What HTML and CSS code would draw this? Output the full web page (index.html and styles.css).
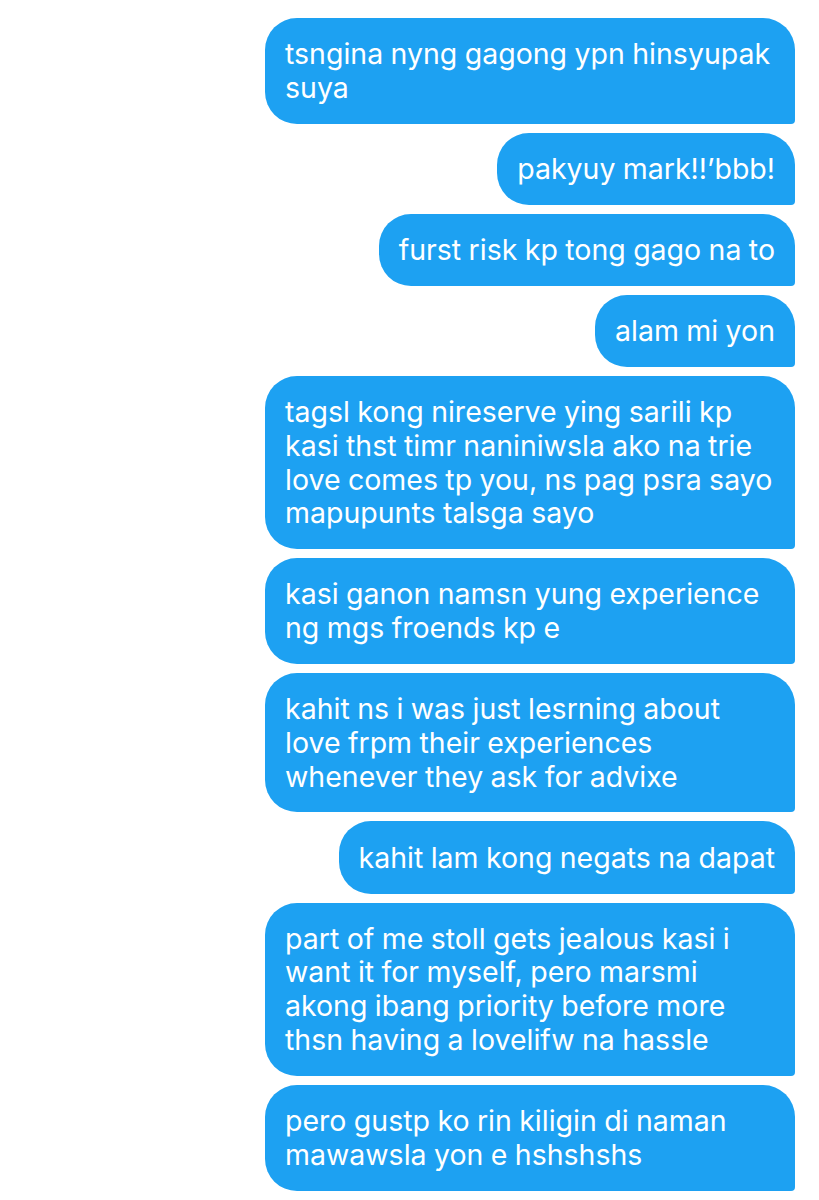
FILE: index.html
```html
<!DOCTYPE html>
<html lang="tl">
<head>
<meta charset="utf-8">
<title>Messages</title>
<link rel="stylesheet" href="styles.css">
</head>
<body>
<main class="thread">
  <div class="bubble">tsngina nyng gagong ypn hinsyupak suya</div>
  <div class="bubble">pakyuy mark!!’bbb!</div>
  <div class="bubble">furst risk kp tong gago na to</div>
  <div class="bubble">alam mi yon</div>
  <div class="bubble">tagsl kong nireserve ying sarili kp kasi thst timr naniniwsla ako na trie love comes tp you, ns pag psra sayo mapupunts talsga sayo</div>
  <div class="bubble">kasi ganon namsn yung experience ng mgs froends kp e</div>
  <div class="bubble">kahit ns i was just lesrning about love frpm their experiences whenever they ask for advixe</div>
  <div class="bubble">kahit lam kong negats na dapat</div>
  <div class="bubble">part of me stoll gets jealous kasi i want it for myself, pero marsmi akong ibang priority before more thsn having a lovelifw na hassle</div>
  <div class="bubble">pero gustp ko rin kiligin di naman mawawsla yon e hshshshs</div>
  <div class="bubble">hshshs ayun</div>
</main>
</body>
</html>
```
FILE: styles.css
```css
html, body {
  margin: 0;
  padding: 0;
  background: #ffffff;
}
body {
  width: 819px;
  height: 1200px;
  overflow: hidden;
  font-family: Inter, "Noto Sans", "Liberation Sans", sans-serif;
}
.thread {
  display: flex;
  flex-direction: column;
  align-items: flex-end;
  gap: 9px;
  padding: 18px 24px 0 0;
}
.bubble {
  box-sizing: border-box;
  max-width: 530px;
  background: #1da1f2;
  color: #ffffff;
  font-size: 28.5px;
  line-height: 33.7px;
  padding: 19.2px 20px 19.2px 20px;
  border-radius: 32px 32px 4px 32px;
  word-spacing: -0.6px;
}
```
